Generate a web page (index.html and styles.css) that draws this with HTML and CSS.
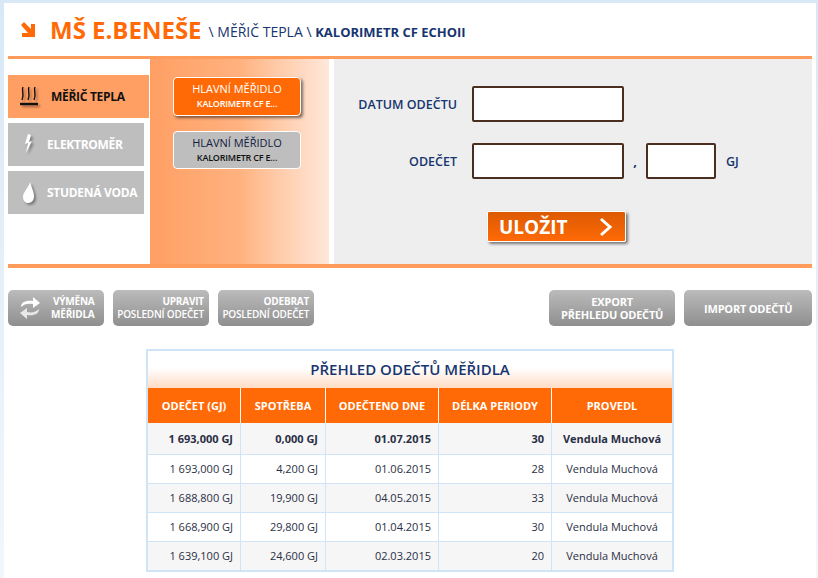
FILE: index.html
```html
<!DOCTYPE html>
<html lang="cs">
<head>
    <meta charset="UTF-8">
    <title>Přehled odečtů měřidla</title>
    <link rel="stylesheet" href="styles.css">
</head>
<body>
    <div class="page">
        <header class="top">
            <svg class="top-arrow" width="18" height="18" viewBox="0 0 18 18"><path d="M2 4 L5 1 L12 8 L12 3 L16 3 L16 16 L3 16 L3 12 L9 12 Z" fill="#ff6a06"/></svg>
            <span class="top-name">MŠ E.BENEŠE</span>
            <span class="top-path">\ MĚŘIČ TEPLA \ <b>KALORIMETR CF ECHOII</b></span>
        </header>

        <section class="main">
            <nav class="nav">
                <a class="nav-item active">
                    <svg width="20" height="22" viewBox="0 0 20 22"><path d="M4 1 C2 5 6 8 3 14 M10 1 C8 5 12 8 9 14 M16 1 C14 5 18 8 15 14" fill="none" stroke="#111" stroke-width="1.4"/><path d="M1 18 H19" stroke="#111" stroke-width="2.4"/></svg>
                    <span>MĚŘIČ TEPLA</span>
                </a>
                <a class="nav-item">
                    <svg width="20" height="24" viewBox="0 0 20 24"><path d="M9 1 L6 11 L9 10 L7 20 L13 8 L10 9 L12 2 Z" fill="#fff"/></svg>
                    <span>ELEKTROMĚR</span>
                </a>
                <a class="nav-item">
                    <svg width="20" height="24" viewBox="0 0 20 24"><path d="M11 1 C10 6 4 11 4 16 C4 20 7 22 9 22 C13 22 15 19 15 15 C15 10 12 6 11 1 Z" fill="#fff"/></svg>
                    <span>STUDENÁ VODA</span>
                </a>
            </nav>

            <div class="meters">
                <a class="meter active">HLAVNÍ MĚŘIDLO<small>KALORIMETR CF E...</small></a>
                <a class="meter">HLAVNÍ MĚŘIDLO<small>KALORIMETR CF E...</small></a>
            </div>

            <form class="form">
                <div class="form-row first">
                    <label>DATUM ODEČTU</label>
                    <input class="input" type="text">
                </div>
                <div class="form-row second">
                    <label>ODEČET</label>
                    <input class="input" type="text">
                    <span class="comma">,</span>
                    <input class="input short" type="text">
                    <span class="unit">GJ</span>
                </div>
                <button class="save" type="button">
                    <span>ULOŽIT</span>
                    <svg width="14" height="20" viewBox="0 0 14 20"><path d="M2 2 L11 10 L2 18" fill="none" stroke="#fff" stroke-width="3"/></svg>
                </button>
            </form>
        </section>

        <div class="actions">
            <a class="btn swap">
                <svg width="24" height="26" viewBox="0 0 24 26"><path d="M3 12 C3 7 8 5 15 6 L15 2 L22 8 L15 13 L15 9 C10 8 6 9 3 12 Z" fill="#fff"/><path d="M21 14 C21 19 16 21 9 20 L9 24 L2 18 L9 13 L9 17 C14 18 18 17 21 14 Z" fill="#e8e8e8"/></svg>
                <span>VÝMĚNA<br>MĚŘIDLA</span>
            </a>
            <a class="btn edit"><span>UPRAVIT<br><i>POSLEDNÍ ODEČET</i></span></a>
            <a class="btn edit"><span>ODEBRAT<br><i>POSLEDNÍ ODEČET</i></span></a>
            <a class="btn export">EXPORT<br>PŘEHLEDU ODEČTŮ</a>
            <a class="btn import">IMPORT ODEČTŮ</a>
        </div>

        <div class="report">
            <h2>PŘEHLED ODEČTŮ MĚŘIDLA</h2>
            <table>
                <thead>
                    <tr>
                        <th class="c1">ODEČET (GJ)</th>
                        <th class="c2">SPOTŘEBA</th>
                        <th class="c3">ODEČTENO DNE</th>
                        <th class="c4">DÉLKA PERIODY</th>
                        <th class="c5">PROVEDL</th>
                    </tr>
                </thead>
                <tbody>
                    <tr class="latest"><td>1 693,000 GJ</td><td>0,000 GJ</td><td>01.07.2015</td><td>30</td><td class="who">Vendula Muchová</td></tr>
                    <tr><td>1 693,000 GJ</td><td>4,200 GJ</td><td>01.06.2015</td><td>28</td><td class="who">Vendula Muchová</td></tr>
                    <tr><td>1 688,800 GJ</td><td>19,900 GJ</td><td>04.05.2015</td><td>33</td><td class="who">Vendula Muchová</td></tr>
                    <tr><td>1 668,900 GJ</td><td>29,800 GJ</td><td>01.04.2015</td><td>30</td><td class="who">Vendula Muchová</td></tr>
                    <tr><td>1 639,100 GJ</td><td>24,600 GJ</td><td>02.03.2015</td><td>20</td><td class="who">Vendula Muchová</td></tr>
                </tbody>
            </table>
        </div>
    </div>
</body>
</html>
```

FILE: styles.css
```css
html, body { margin: 0; padding: 0; height: 578px; overflow: hidden; }
body { background: linear-gradient(#d8e8f6, #f2f7fc); padding: 3px 2px 0 4px; box-sizing: border-box; font-family: "Open Sans", sans-serif; color: #1b2b52; }
.page { background: #fff; height: 575px; padding: 0 4px; box-sizing: border-box; }

.top { height: 53px; display: flex; align-items: center; border-bottom: 3px solid #ff9c5c; padding-left: 11px; box-sizing: content-box; }
.top-arrow { margin-right: 13px; }
.top-name { color: #ff6a06; font-size: 24px; font-weight: 700; margin-right: 7px; }
.top-path { color: #17356f; font-size: 14px; position: relative; top: 2px; }
.top-path b { font-size: 13px; }

.main { height: 205px; display: flex; border-bottom: 4px solid #ff9c5c; }
.nav { width: 142px; padding-top: 16px; display: flex; flex-direction: column; gap: 5px; }
.nav-item { width: 136px; height: 43px; background: #bebebe; color: #fff; display: flex; align-items: center; gap: 8px; padding-left: 11px; box-sizing: border-box; font-size: 12px; font-weight: 700; letter-spacing: -0.3px; }
.nav-item svg { filter: drop-shadow(2px 2px 1px rgba(0,0,0,.35)); }
.nav-item.active { width: 141px; background: #ff9f64; color: #111; gap: 12px; }

.meters { width: 179px; padding: 18px 0 0 23px; box-sizing: border-box; background: linear-gradient(90deg, #ff9f64 0%, #ffb27f 50%, #ffc9a6 70%, #ffe8da 100%); display: flex; flex-direction: column; gap: 15px; }
.meter { width: 128px; height: 38px; box-sizing: border-box; border: 1px solid #fff; border-radius: 4px; background: #bebebe; color: #11203f; font-size: 11px; text-align: center; line-height: 17px; padding-top: 2px; }
.meter small { display: block; font-size: 9px; font-weight: 600; color: #111; line-height: 14px; letter-spacing: -0.2px; }
.meter.active { height: 39px; background: #ff6a06; color: #fff; box-shadow: 2px 2px 3px rgba(0,0,0,.5); }
.meter.active small { color: #fff; }

.form { margin-left: 5px; flex: 1; background: #eee; padding-top: 27px; }
.form-row { display: flex; align-items: center; }
.form-row.second { margin-top: 21px; }
.form-row label { width: 138px; text-align: right; padding-right: 15px; box-sizing: border-box; color: #17356f; font-size: 12.5px; font-weight: 600; }
.input { width: 152px; height: 36px; margin: 0; padding: 0; box-sizing: border-box; background: #fff; border: 2px solid #4a2f20; border-radius: 2px; }
.input.short { width: 70px; }
.comma { width: 22px; text-align: center; color: #17356f; font-size: 13px; font-weight: 700; }
.unit { margin-left: 10px; color: #17356f; font-size: 12.5px; font-weight: 600; }
.save { display: flex; align-items: center; justify-content: space-between; margin: 32px 0 0 153px; width: 139px; height: 31px; padding: 0 12px 0 11px; border: 1px solid #fff; border-radius: 2px; background: linear-gradient(#dc5a02, #ff6a06); color: #fff; font: 700 19px "Open Sans", sans-serif; box-shadow: 2px 2px 3px rgba(0,0,0,.5); }

.actions { display: flex; margin-top: 22px; gap: 9px; }
.btn { height: 36px; box-sizing: border-box; border-radius: 5px; background: linear-gradient(#bbb, #8f8f8f); color: #fff; font-size: 10px; font-weight: 700; line-height: 13px; letter-spacing: -0.2px; display: flex; align-items: center; justify-content: center; text-align: center; }
.btn.swap { width: 97px; justify-content: space-between; padding: 0 9px 0 10px; }
.btn.swap span, .btn.edit span { text-align: right; }
.btn.edit { width: 98px; }
.btn.edit i { font-style: normal; font-weight: 600; }
.btn.export { width: 129px; margin-left: 226px; font-size: 11px; display: block; padding-top: 5px; }
.btn.import { width: 130px; font-size: 11px; }

.report { width: 528px; margin: 23px 0 0 138px; border: 2px solid #cfe4f7; box-sizing: border-box; }
.report h2 { margin: 0; height: 37px; line-height: 36px; text-align: center; font-size: 15px; font-weight: 600; color: #17356f; background: linear-gradient(#fff 45%, #ffdcc6); }
table { width: 524px; table-layout: fixed; border-collapse: collapse; font-size: 11px; }
th { height: 35px; padding: 0; background: #ff6a06; color: #fff; font-size: 11px; font-weight: 700; border-left: 1px solid #fff; }
th:first-child { border-left: 0; }
.c1 { width: 92px; }
.c2 { width: 84px; }
.c3 { width: 112px; }
.c4 { width: 112px; }
td { height: 29px; padding: 0 7px 0 0; box-sizing: border-box; text-align: right; color: #2a2f45; border: 1px solid #cfe4f7; border-width: 0 0 1px 1px; }
td:first-child { border-left: 0; }
tr:nth-child(odd) td { background: #f6f6f6; }
tbody tr:last-child td { border-bottom: 0; }
.latest td { font-weight: 700; height: 31px; }
td.who { text-align: center; padding: 0; }
```
